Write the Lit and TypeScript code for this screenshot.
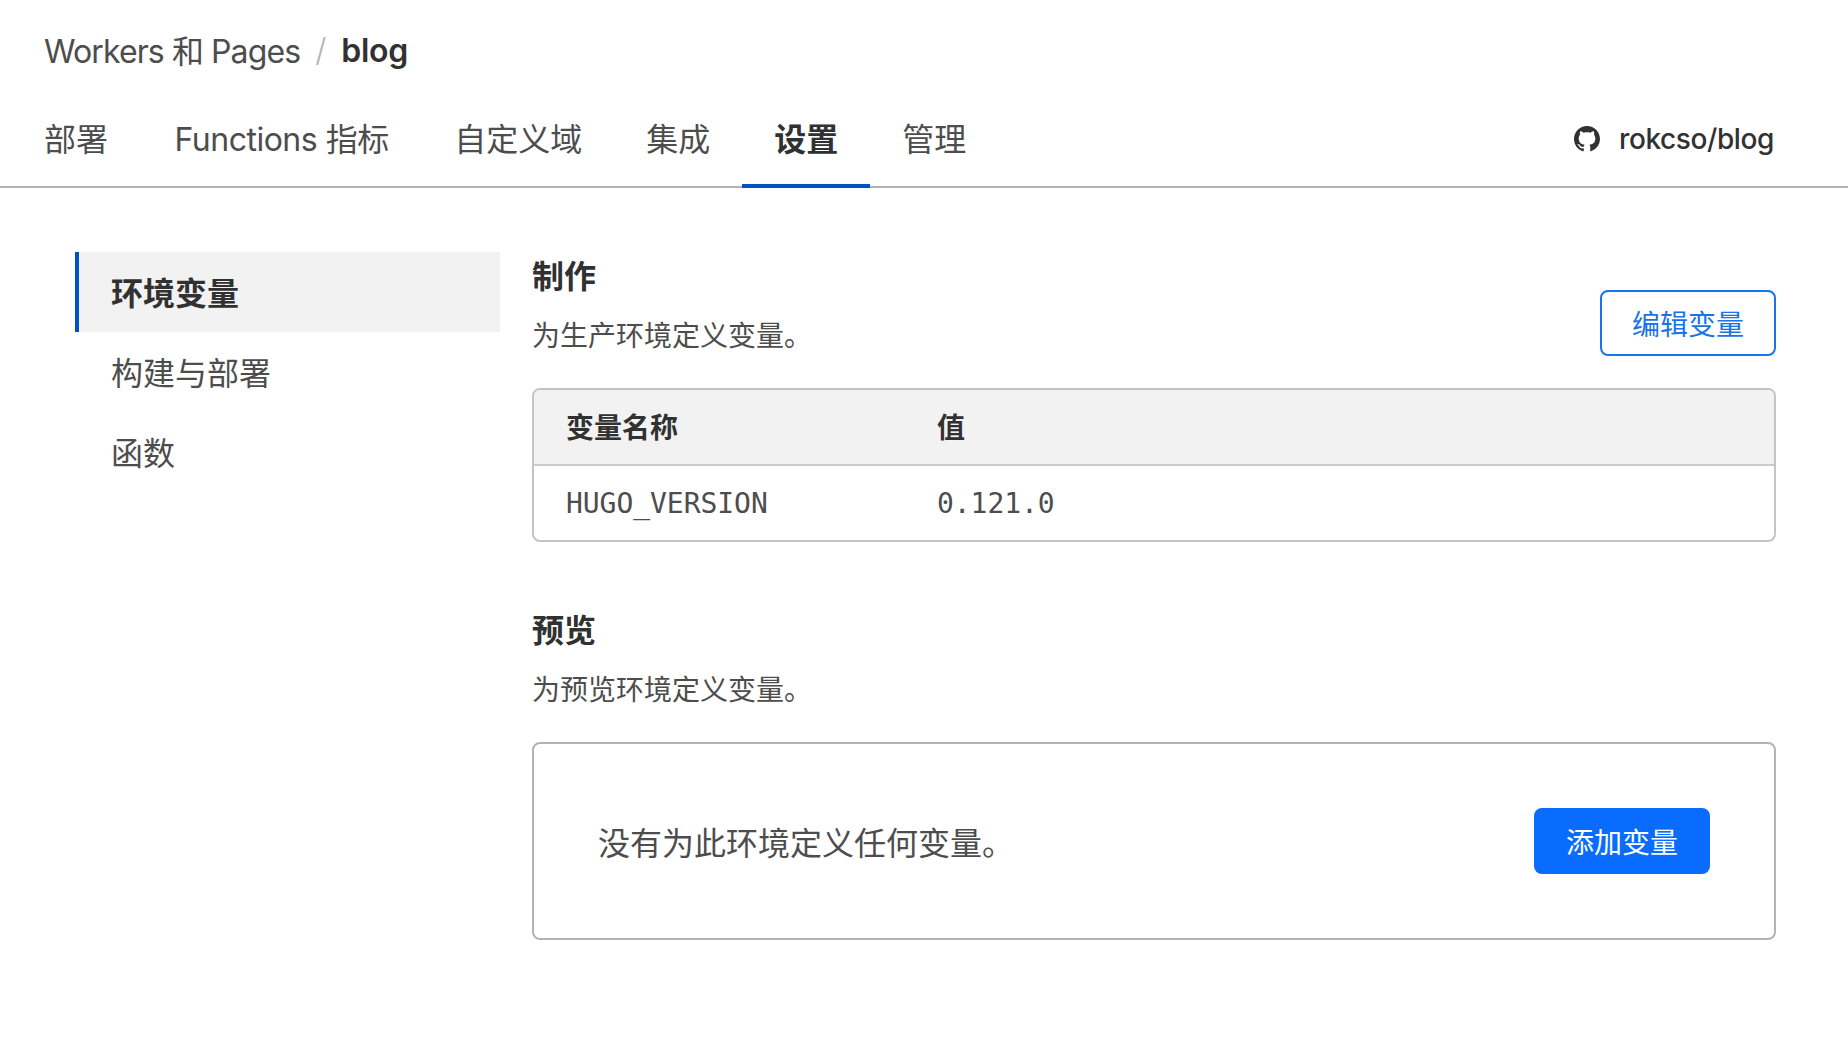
import { LitElement, html, css } from "lit";
import { customElement } from "lit/decorators.js";

@customElement("app-root")
export class AppRoot extends LitElement {
  static styles = css`
    :host {
      display: block;
      min-height: 1038px;
      background: #fff;
      color: #4d4d4d;
      font-family: Inter, "Noto Sans CJK SC", sans-serif;
      font-size: 32px;
    }
    * { box-sizing: border-box; }
    .crumbs {
      display: flex;
      align-items: center;
      height: 48px;
      margin: 25px 0 0 44px;
      gap: 15px;
    }
    .crumbs .root { letter-spacing: -0.9px; }
    .crumbs .sep { color: #b3b3b3; font-weight: 300; }
    .crumbs b { color: #313131; font-weight: 600; letter-spacing: -0.3px; padding-top: 2px; }
    .tabs {
      display: flex;
      align-items: stretch;
      height: 98px;
      margin-top: 17px;
      padding: 0 74px 0 12px;
      border-bottom: 2px solid #b3b3b3;
    }
    .tab {
      display: flex;
      align-items: center;
      padding: 0 32px;
      margin-bottom: -2px;
      border-bottom: 4px solid transparent;
    }
    .tab.latin {
      padding: 0 33.5px 0 34.5px;
      letter-spacing: -0.5px;
    }
    .tab.active {
      color: #313131;
      font-weight: 700;
      border-bottom-color: #0051c3;
    }
    .repo {
      margin-left: auto;
      padding-top: 2px;
      display: flex;
      align-items: center;
      gap: 19px;
      font-size: 28px;
      letter-spacing: -0.4px;
      color: #313131;
      font-weight: 500;
    }
    .repo svg { width: 26px; height: 26px; fill: #313131; display: block; }
    main {
      display: grid;
      grid-template-columns: 425px 1fr;
      column-gap: 32px;
      padding: 64px 72px 0 75px;
    }
    .side { display: flex; flex-direction: column; }
    .side a {
      display: flex;
      align-items: center;
      height: 80px;
      padding: 0 0 2px 32px;
      border-left: 4px solid transparent;
    }
    .side a.active {
      background: #f2f2f2;
      border-left-color: #0051c3;
      color: #313131;
      font-weight: 700;
    }
    .head {
      display: flex;
      justify-content: space-between;
      align-items: flex-end;
    }
    .head .btn { margin-bottom: 2px; }
    h2 {
      margin: 0;
      font-size: 32px;
      line-height: 50px;
      font-weight: 700;
      color: #313131;
    }
    p {
      margin: 12px 0 0;
      font-size: 28px;
      line-height: 44px;
    }
    .btn {
      display: flex;
      align-items: center;
      justify-content: center;
      width: 176px;
      height: 66px;
      padding-bottom: 1px;
      border-radius: 8px;
      font-size: 28px;
      flex: none;
    }
    .btn.outline { border: 2px solid #1a73e8; color: #1a73e8; }
    .btn.solid { background: #0a6cff; color: #fff; }
    .table {
      margin-top: 30px;
      border: 2px solid #c4c4c4;
      border-radius: 8px;
      overflow: hidden;
      display: grid;
      grid-template-columns: 371px 1fr;
      font-size: 28px;
    }
    .cell {
      height: 74px;
      padding: 0 32px;
      display: flex;
      align-items: center;
    }
    .th {
      height: 76px;
      padding-bottom: 2px;
      background: #f2f2f2;
      border-bottom: 2px solid #ccc;
      color: #313131;
      font-weight: 700;
    }
    .mono { font-family: "DejaVu Sans Mono", monospace; letter-spacing: -0.05px; }
    section + section { margin-top: 64px; }
    .empty {
      margin-top: 30px;
      border: 2px solid #b3b3b3;
      border-radius: 8px;
      padding: 64px;
      display: flex;
      align-items: center;
      justify-content: space-between;
    }
  `;

  render() {
    const tabs = ["部署", "Functions 指标", "自定义域", "集成", "设置", "管理"];
    const side = ["环境变量", "构建与部署", "函数"];
    return html`
      <header>
        <div class="crumbs">
          <span class="root">Workers 和 Pages</span><span class="sep">/</span><b>blog</b>
        </div>
        <nav class="tabs">
          ${tabs.map(
            (t) =>
              html`<div class="tab ${t === "设置" ? "active" : ""} ${t.startsWith("F") ? "latin" : ""}">${t}</div>`
          )}
          <div class="repo">
            <svg viewBox="0 0 16 16" aria-hidden="true">
              <path d="M8 0C3.58 0 0 3.58 0 8c0 3.54 2.29 6.53 5.47 7.59.4.07.55-.17.55-.38 0-.19-.01-.82-.01-1.49-2.01.37-2.53-.49-2.69-.94-.09-.23-.48-.94-.82-1.13-.28-.15-.68-.52-.01-.53.63-.01 1.08.58 1.23.82.72 1.21 1.87.87 2.33.66.07-.52.28-.87.51-1.07-1.78-.2-3.64-.89-3.64-3.95 0-.87.31-1.59.82-2.15-.08-.2-.36-1.02.08-2.12 0 0 .67-.21 2.2.82.64-.18 1.32-.27 2-.27s1.36.09 2 .27c1.53-1.04 2.2-.82 2.2-.82.44 1.1.16 1.92.08 2.12.51.56.82 1.27.82 2.15 0 3.07-1.87 3.75-3.65 3.95.29.25.54.73.54 1.48 0 1.07-.01 1.93-.01 2.2 0 .21.15.46.55.38A8.01 8.01 0 0 0 16 8c0-4.42-3.58-8-8-8z"></path>
            </svg>
            <span>rokcso/blog</span>
          </div>
        </nav>
      </header>
      <main>
        <aside class="side">
          ${side.map((s, i) => html`<a class="${i === 0 ? "active" : ""}">${s}</a>`)}
        </aside>
        <div>
          <section>
            <div class="head">
              <div>
                <h2>制作</h2>
                <p>为生产环境定义变量。</p>
              </div>
              <div class="btn outline">编辑变量</div>
            </div>
            <div class="table">
              <div class="cell th">变量名称</div>
              <div class="cell th">值</div>
              <div class="cell mono">HUGO_VERSION</div>
              <div class="cell mono">0.121.0</div>
            </div>
          </section>
          <section>
            <h2>预览</h2>
            <p>为预览环境定义变量。</p>
            <div class="empty">
              <span>没有为此环境定义任何变量。</span>
              <div class="btn solid">添加变量</div>
            </div>
          </section>
        </div>
      </main>
    `;
  }
}
